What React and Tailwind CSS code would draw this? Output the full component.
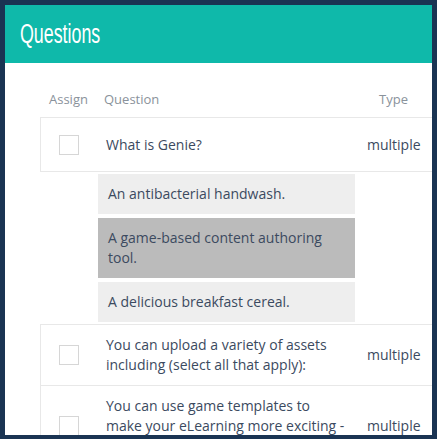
export default function App() {
  const textCls = "text-[14px] leading-[20px] text-[#3b4a60]";
  const Checkbox = () => (
    <div className="w-[20px] h-[20px] border border-[#d6d6d6] bg-white" />
  );
  return (
    <div className="w-[437px] h-[439px] bg-[#1a3453] pt-[5px] pl-[5px] pr-[5px] pb-[4px]" style={{ fontFamily: '"Open Sans", sans-serif' }}>
      <div className="w-full h-full bg-white overflow-hidden flex flex-col">
        <div className="h-[58px] shrink-0 bg-[#0fb9aa] flex items-center pl-[15px]">
          <span className="inline-block origin-left scale-x-[0.66] text-white text-[27px] leading-none" style={{ fontFamily: '"Liberation Sans", Arial, sans-serif' }}>
            Questions
          </span>
        </div>
        <div className="pl-[35px] pt-[27px]">
          <div className="flex h-[20px] items-center text-[13px] text-[#8a929b]">
            <div className="w-[65px] pl-[9px]">Assign</div>
            <div className="w-[276px] -ml-[1px]">Question</div>
            <div className="-ml-[1px]">Type</div>
          </div>
          <div className="mt-[7px] w-[460px]">
            <div className="flex h-[55px] items-center border-t border-b border-l border-[#e8e8e8]">
              <div className="w-[65px] pl-[18px] flex items-center"><Checkbox /></div>
              <div className={`w-[261px] pr-[20px] ${textCls}`}>What is Genie?</div>
              <div className={textCls}>multiple</div>
            </div>
            <div className="pl-[58px] pt-[2px] pb-[2px] flex flex-col gap-[4px]">
              <div className={`w-[257px] bg-[#eeeeee] px-[10px] py-[10px] ${textCls}`}>An antibacterial handwash.</div>
              <div className={`w-[257px] bg-[#bbbbbb] px-[10px] py-[10px] ${textCls}`}>A game-based content authoring tool.</div>
              <div className={`w-[257px] bg-[#eeeeee] px-[10px] py-[10px] ${textCls}`}>A delicious breakfast cereal.</div>
            </div>
            <div className="flex items-center border-t border-l border-[#e8e8e8] py-[10px]">
              <div className="w-[65px] pl-[18px] flex items-center"><Checkbox /></div>
              <div className={`w-[261px] pr-[20px] ${textCls}`}>You can upload a variety of assets including (select all that apply):</div>
              <div className={textCls}>multiple</div>
            </div>
            <div className="flex items-center border-t border-l border-[#e8e8e8] py-[10px]">
              <div className="w-[65px] pl-[18px] flex items-center"><Checkbox /></div>
              <div className={`w-[261px] pr-[20px] ${textCls}`}>You can use game templates to make your eLearning more exciting - true or false?</div>
              <div className={textCls}>multiple</div>
            </div>
          </div>
        </div>
      </div>
    </div>
  );
}
